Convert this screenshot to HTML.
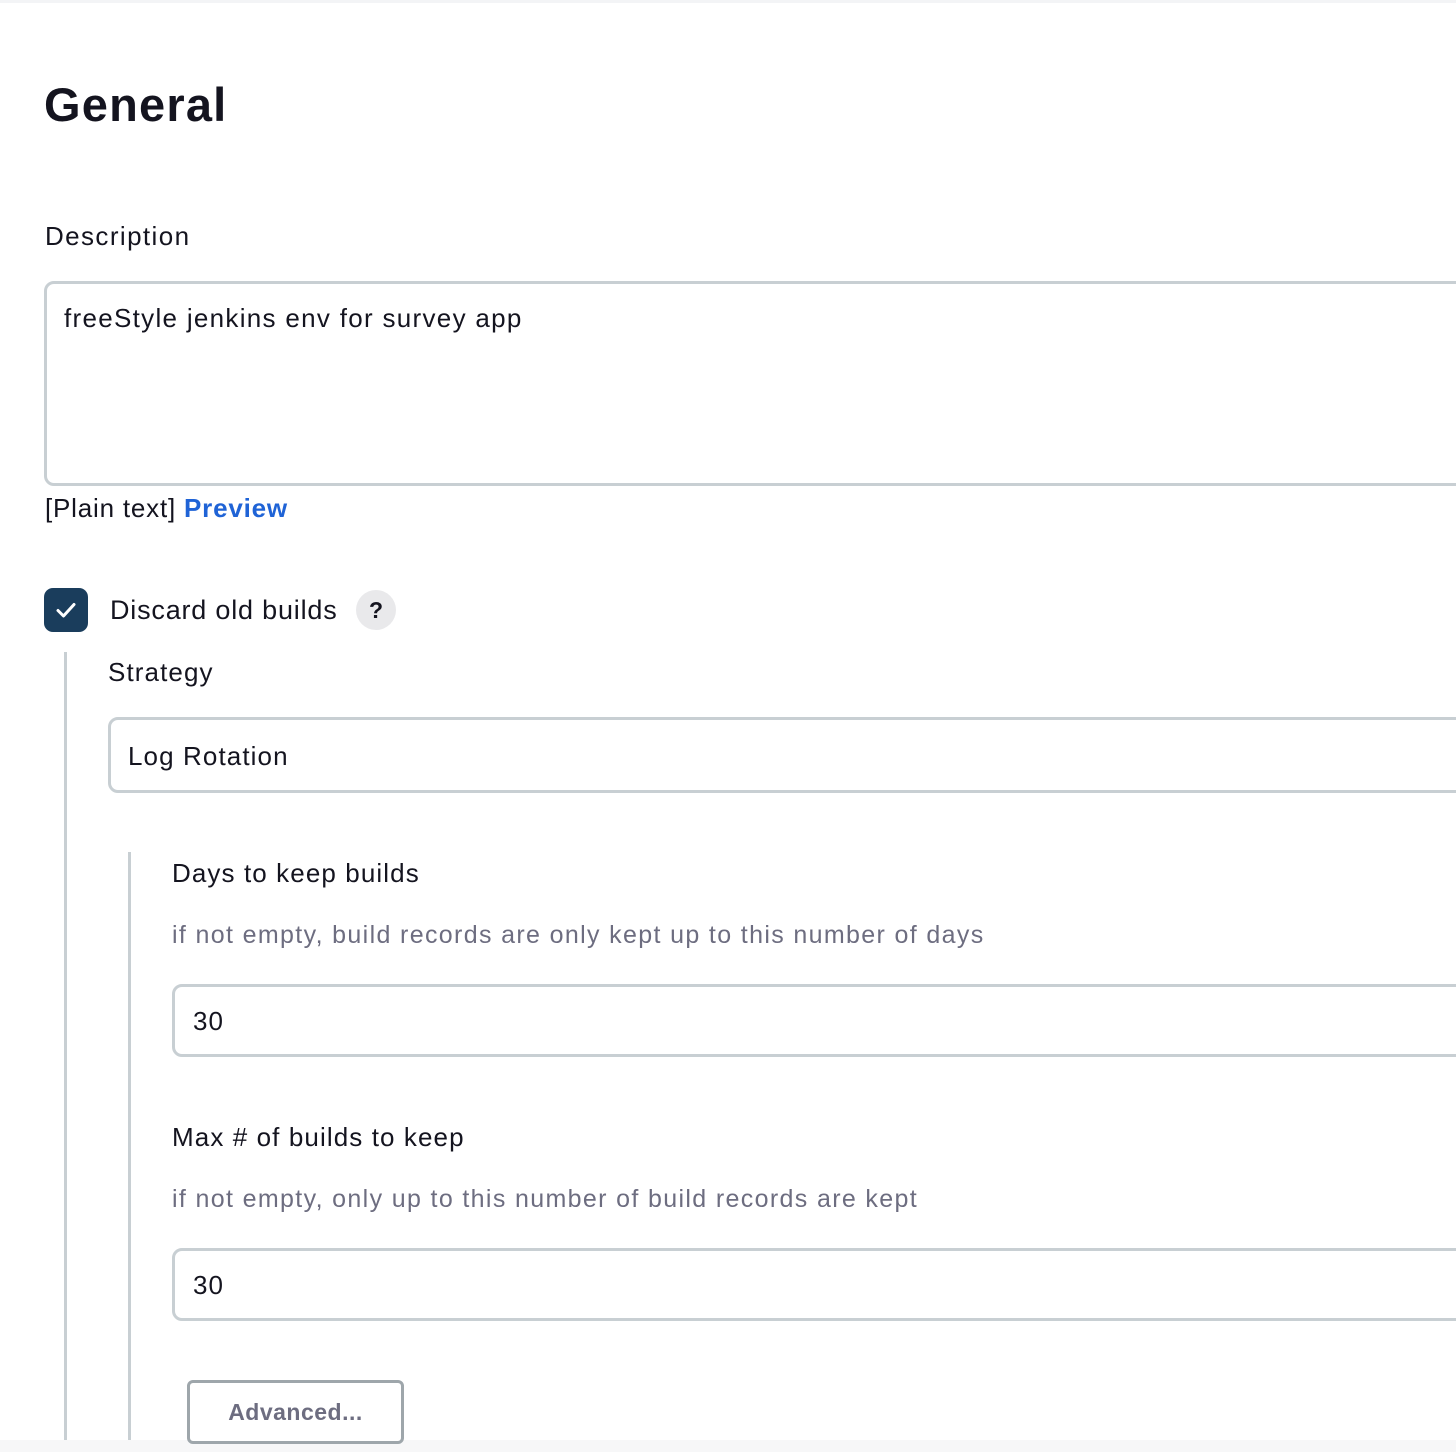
<!DOCTYPE html>
<html><head><meta charset="utf-8"><style>
html,body{margin:0;padding:0;}
body{width:1456px;height:1452px;position:relative;overflow:hidden;background:#fff;font-family:"Liberation Sans",sans-serif;color:#14141f;}
.a{position:absolute;white-space:nowrap;}
.box{position:absolute;border:3px solid #c8cfd3;border-radius:10px;background:#fff;box-sizing:border-box;}
.lbl{font-size:26px;line-height:30px;letter-spacing:1.1px;}
.help{font-size:25px;line-height:30px;color:#6d6d80;letter-spacing:1.35px;}
.vl{position:absolute;width:3px;background:#c8cfd3;}
</style></head><body>
<div class="a" style="left:0;top:0;width:1456px;height:3px;background:#f3f4f6"></div>
<div class="a" style="left:44px;top:75px;font-size:47px;font-weight:bold;line-height:60px;letter-spacing:1.2px">General</div>
<div class="a lbl" style="left:45px;top:221px;letter-spacing:1.4px">Description</div>
<div class="box" style="left:44px;top:281px;width:1450px;height:205px"></div>
<div class="a lbl" style="left:64px;top:303px;letter-spacing:1.3px">freeStyle jenkins env for survey app</div>
<div class="a lbl" style="left:45px;top:493px;letter-spacing:0.8px">[Plain text] <span style="color:#1f63d6;font-weight:bold">Preview</span></div>
<div class="a" style="left:44px;top:588px;width:44px;height:44px;background:#1a3d5c;border-radius:9px"><svg width="44" height="44" viewBox="0 0 44 44"><path d="M14 22.5l5.5 5.5L30 16.5" fill="none" stroke="#fff" stroke-width="3" stroke-linecap="round" stroke-linejoin="round"/></svg></div>
<div class="a" style="left:110px;top:594px;font-size:27px;line-height:32px;letter-spacing:0.8px">Discard old builds</div>
<div class="a" style="left:356px;top:590px;width:40px;height:40px;border-radius:50%;background:#e9e9eb;text-align:center;line-height:40px;font-size:23px;font-weight:bold">?</div>
<div class="vl" style="left:64px;top:652px;height:791px"></div>
<div class="a lbl" style="left:108px;top:657px">Strategy</div>
<div class="box" style="left:108px;top:717px;width:1400px;height:76px"></div>
<div class="a lbl" style="left:128px;top:741px">Log Rotation</div>
<div class="vl" style="left:128px;top:852px;height:591px"></div>
<div class="a lbl" style="left:172px;top:858px">Days to keep builds</div>
<div class="a help" style="left:172px;top:920px">if not empty, build records are only kept up to this number of days</div>
<div class="box" style="left:172px;top:984px;width:1350px;height:73px"></div>
<div class="a lbl" style="left:193px;top:1006px">30</div>
<div class="a lbl" style="left:172px;top:1122px">Max # of builds to keep</div>
<div class="a help" style="left:172px;top:1184px">if not empty, only up to this number of build records are kept</div>
<div class="box" style="left:172px;top:1248px;width:1350px;height:73px"></div>
<div class="a lbl" style="left:193px;top:1270px">30</div>
<div class="a" style="left:0;top:1440px;width:1456px;height:12px;background:#f7f7f8"></div>
<div class="a" style="left:187px;top:1380px;width:217px;height:64px;box-sizing:border-box;border:3px solid #9ea6ab;border-radius:6px;background:#fff;text-align:center;line-height:58px;font-size:23px;font-weight:bold;color:#6d6d80;letter-spacing:0.5px">Advanced...</div>
</body></html>
